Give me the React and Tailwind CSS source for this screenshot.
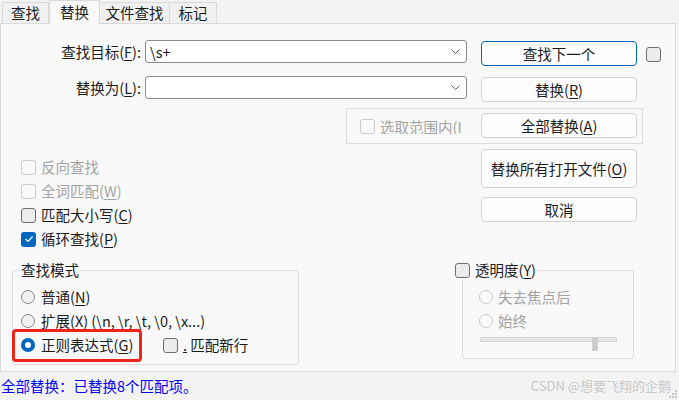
import React from "react";

const FONT = "font-['Noto_Sans_CJK_SC','Noto_Sans',sans-serif]";

function CheckBox({ variant = "normal" }) {
  if (variant === "checked")
    return (
      <span className="flex h-[15px] w-[15px] shrink-0 items-center justify-center rounded-[3px] bg-[#0067c0]">
        <svg width="10" height="8" viewBox="0 0 10 8">
          <path d="M1.5 4 L4 6.3 L8.6 1.5" fill="none" stroke="white" strokeWidth="1.2" />
        </svg>
      </span>
    );
  if (variant === "disabled")
    return <span className="block h-[15px] w-[15px] shrink-0 rounded-[3px] border border-[#cacaca] bg-[#f9f9f9]" />;
  return <span className="block h-[15px] w-[15px] shrink-0 rounded-[3px] border border-[#6e6e6e] bg-[#ececec]" />;
}

function Radio({ variant = "normal" }) {
  if (variant === "selected")
    return (
      <span className="flex h-[14px] w-[14px] shrink-0 items-center justify-center rounded-full bg-[#0067c0]">
        <span className="block h-[6px] w-[6px] rounded-full bg-white" />
      </span>
    );
  if (variant === "disabled")
    return <span className="block h-[14px] w-[14px] shrink-0 rounded-full border border-[#cacaca] bg-[#f9f9f9]" />;
  return <span className="block h-[14px] w-[14px] shrink-0 rounded-full border border-[#8a8a8a] bg-[#efefef]" />;
}

function Btn({ children, className = "", focused = false }) {
  return (
    <div
      className={`flex w-[156px] shrink-0 items-center justify-center rounded-[4px] border bg-[#fdfdfd] ${
        focused ? "border-[#0067c0]" : "border-[#d2d2d2]"
      } ${className}`}
    >
      {children}
    </div>
  );
}

function Combo({ value }) {
  return (
    <div className="flex h-[23px] w-[322px] shrink-0 items-center justify-between rounded-[3px] border border-[#8c8c8c] bg-white pl-[4px] pr-[6px]">
      <span className="text-[#1b1b1b]">{value}</span>
      <svg width="9" height="5" viewBox="0 0 9 5">
        <path d="M0.5 0.5 L4.5 4.5 L8.5 0.5" fill="none" stroke="#5f5f5f" strokeWidth="1" />
      </svg>
    </div>
  );
}

function Acc({ k }) {
  return (
    <span>
      (<span className="underline underline-offset-[2px]">{k}</span>)
    </span>
  );
}

function Tab({ children, w, selected }) {
  if (selected)
    return (
      <div
        className={`mb-[-1px] flex h-[24px] ${w} items-start justify-center border-x border-t border-[#dadada] bg-[#f9f9f9] pt-[1px]`}
      >
        {children}
      </div>
    );
  return (
    <div className={`flex h-[21px] ${w} items-center justify-center border-x border-t border-[#dadada] bg-[#f0f0f0] -ml-px first:ml-0`}>
      {children}
    </div>
  );
}

export default function App() {
  return (
    <div
      className={`flex h-[400px] w-[679px] flex-col overflow-hidden bg-[#f3f3f3] text-[14.5px] leading-[20px] text-[#1b1b1b] ${FONT}`}
    >
      {/* Tabs */}
      <div className="relative z-10 flex h-[23px] items-end pl-[2px]">
        <Tab w="w-[47px]">查找</Tab>
        <Tab w="w-[51px]" selected>
          替换
        </Tab>
        <Tab w="w-[71px]">文件查找</Tab>
        <Tab w="w-[48px]">标记</Tab>
      </div>

      {/* Panel */}
      <div className="h-[349px] w-[676px] shrink-0 border border-[#dadada] bg-[#f9f9f9]">
        {/* Row 1 */}
        <div className="mt-[16px] flex h-[26px] items-start">
          <div className="flex h-[23px] w-[144px] items-center justify-end pr-[4px]">
            查找目标<Acc k="F" /> :
          </div>
          <Combo value="\s+" />
          <Btn focused className="ml-[14px] mt-[1px] h-[25px]">
            查找下一个
          </Btn>
          <div className="ml-[9px] mt-[7px]">
            <CheckBox />
          </div>
        </div>

        {/* Row 2 */}
        <div className="mt-[10px] flex h-[26px] items-start">
          <div className="flex h-[23px] w-[144px] items-center justify-end pr-[4px]">
            替换为<Acc k="L" /> :
          </div>
          <Combo value="" />
          <Btn className="ml-[14px] mt-[1px] h-[25px]">
            替换<Acc k="R" />
          </Btn>
        </div>

        {/* Row 3: selection group */}
        <div className="mt-[6px] ml-[345px] flex h-[36px] w-[297px] items-start border border-[#dcdcdc] pl-[13px]">
          <div className="mt-[10px] flex h-[15px] w-[121px] items-center gap-[5px] overflow-hidden whitespace-nowrap text-[#a3a3a3]">
            <CheckBox variant="disabled" />
            <span>
              选取范围内(<span className="underline">I</span>
            </span>
          </div>
          <Btn className="mt-[4px] h-[25px]">
            全部替换<Acc k="A" />
          </Btn>
        </div>

        {/* Row 4 */}
        <div className="flex">
          <div className="flex w-[480px] flex-col pl-[20px] pt-[11px]">
            <div className="flex h-[24px] items-center gap-[5px] text-[#a3a3a3]">
              <CheckBox variant="disabled" />
              反向查找
            </div>
            <div className="flex h-[24px] items-center gap-[5px] text-[#a3a3a3]">
              <CheckBox variant="disabled" />
              <span>
                全词匹配<Acc k="W" />
              </span>
            </div>
            <div className="flex h-[24px] items-center gap-[5px]">
              <CheckBox />
              <span>
                匹配大小写<Acc k="C" />
              </span>
            </div>
            <div className="flex h-[24px] items-center gap-[5px]">
              <CheckBox variant="checked" />
              <span>
                循环查找<Acc k="P" />
              </span>
            </div>
          </div>
          <div className="flex flex-col">
            <Btn className="mt-[5px] h-[39px]">
              替换所有打开文件<Acc k="O" />
            </Btn>
            <Btn className="mt-[9px] h-[25px]">取消</Btn>
          </div>
        </div>

        {/* Row 5 */}
        <div className="mt-[9px] flex items-start">
          <fieldset className="ml-[11px] w-[287px] rounded-[3px] border border-[#dcdcdc] p-0">
            <legend className="ml-[7px] px-[1px] leading-[20px]">查找模式</legend>
            <div className="pb-[7px] pl-[8px] pt-[5px]">
              <div className="flex h-[24px] items-center gap-[6px]">
                <Radio />
                <span>
                  普通<Acc k="N" />
                </span>
              </div>
              <div className="flex h-[24px] items-center gap-[6px] whitespace-nowrap">
                <Radio />
                <span>
                  扩展<Acc k="X" /> (\n, \r, \t, \0, \x...)
                </span>
              </div>
              <div className="relative flex h-[24px] items-center">
                <div className="flex w-[142px] items-center gap-[6px]">
                  <Radio variant="selected" />
                  <span>
                    正则表达式<Acc k="G" />
                  </span>
                </div>
                <div className="flex items-center gap-[5px]">
                  <CheckBox />
                  <span>
                    <span className="underline">.</span> 匹配新行
                  </span>
                </div>
                <div className="absolute left-[-9px] top-[-4px] h-[33px] w-[130px] rounded-[4px] border-[3px] border-[#f0231c]" />
              </div>
            </div>
          </fieldset>

          <fieldset className="ml-[163px] w-[172px] rounded-[3px] border border-[#dcdcdc] p-0">
            <legend className="-ml-[8px] flex items-center gap-[5px] pr-[2px] leading-[20px]">
              <CheckBox />
              <span>
                透明度<Acc k="Y" />
              </span>
            </legend>
            <div className="pb-[7px] pl-[16px] pt-[5px] text-[#a3a3a3]">
              <div className="flex h-[24px] items-center gap-[5px]">
                <Radio variant="disabled" />
                失去焦点后
              </div>
              <div className="flex h-[24px] items-center gap-[5px]">
                <Radio variant="disabled" />
                始终
              </div>
              <div className="relative ml-[1px] mt-[1px] h-[14px] w-[137px]">
                <div className="mt-[4px] h-[5px] w-full rounded-[1px] border border-[#d4d4d4] bg-[#e6e6e6]" />
                <div className="absolute left-[112px] top-0 h-[14px] w-[6px] rounded-[1px] bg-[#cccccc]" />
              </div>
            </div>
          </fieldset>
        </div>
      </div>

      {/* Status bar */}
      <div className="relative flex flex-1 items-center justify-between pl-[1px] pr-[8px]">
        <span className="text-[#0000ff]">全部替换：已替换8个匹配项。</span>
        <span className="text-[13px] text-[#c8c8c8]">CSDN @想要飞翔的企鹅</span>
        <svg className="absolute bottom-[2px] right-[2px]" width="8" height="8" viewBox="0 0 8 8">
          <rect x="6" y="0" width="2" height="2" fill="#c4c4c4" />
          <rect x="3" y="3" width="2" height="2" fill="#c4c4c4" />
          <rect x="6" y="3" width="2" height="2" fill="#c4c4c4" />
          <rect x="0" y="6" width="2" height="2" fill="#c4c4c4" />
          <rect x="3" y="6" width="2" height="2" fill="#c4c4c4" />
          <rect x="6" y="6" width="2" height="2" fill="#c4c4c4" />
        </svg>
      </div>
    </div>
  );
}
